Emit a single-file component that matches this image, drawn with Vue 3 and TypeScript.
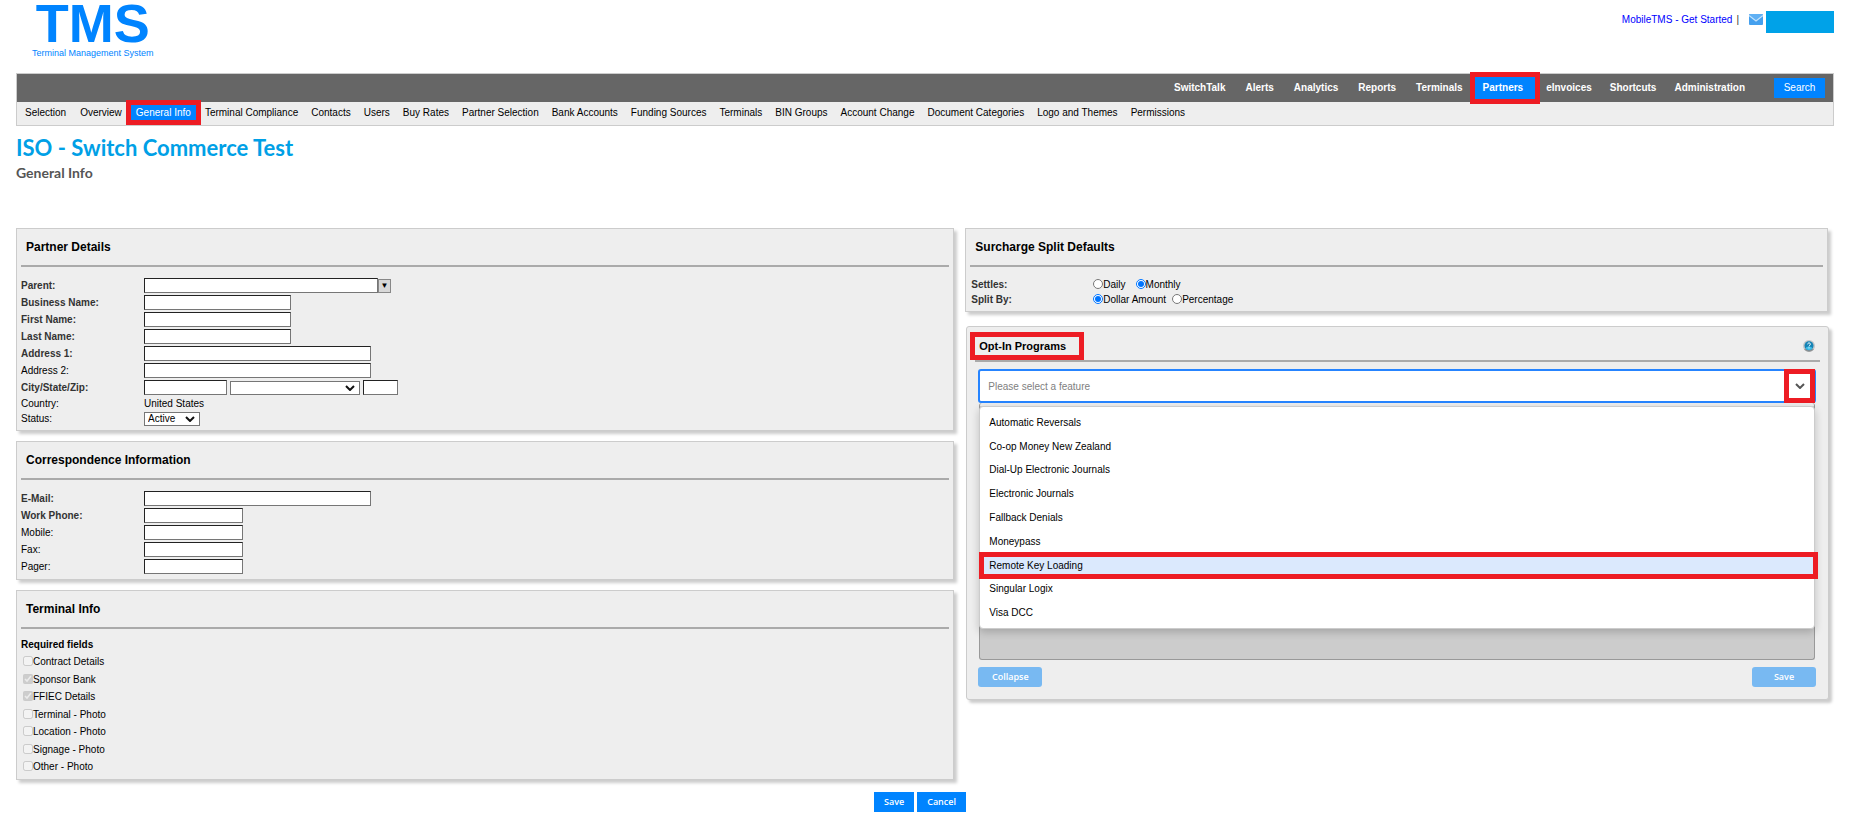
<script setup lang="ts">
import { ref } from 'vue'

interface Field {
  id: string
  label: string
  bold: boolean
  size: string
}

const mainNav: string[] = ['SwitchTalk', 'Alerts', 'Analytics', 'Reports', 'Terminals', 'Partners', 'eInvoices', 'Shortcuts', 'Administration']
const subNav: string[] = [
  'Selection', 'Overview', 'General Info', 'Terminal Compliance', 'Contacts', 'Users', 'Buy Rates',
  'Partner Selection', 'Bank Accounts', 'Funding Sources', 'Terminals', 'BIN Groups', 'Account Change',
  'Document Categories', 'Logo and Themes', 'Permissions',
]
const nameFields: Field[] = [
  { id: 'business', label: 'Business Name:', bold: true, size: 'medium' },
  { id: 'first', label: 'First Name:', bold: true, size: 'medium' },
  { id: 'last', label: 'Last Name:', bold: true, size: 'medium' },
  { id: 'address1', label: 'Address 1:', bold: true, size: 'large' },
  { id: 'address2', label: 'Address 2:', bold: false, size: 'large' },
]
const contactFields: Field[] = [
  { id: 'email', label: 'E-Mail:', bold: true, size: 'large' },
  { id: 'work', label: 'Work Phone:', bold: true, size: 'small' },
  { id: 'mobile', label: 'Mobile:', bold: false, size: 'small' },
  { id: 'fax', label: 'Fax:', bold: false, size: 'small' },
  { id: 'pager', label: 'Pager:', bold: false, size: 'small' },
]
const requiredFields = [
  { label: 'Contract Details', checked: false },
  { label: 'Sponsor Bank', checked: true },
  { label: 'FFIEC Details', checked: true },
  { label: 'Terminal - Photo', checked: false },
  { label: 'Location - Photo', checked: false },
  { label: 'Signage - Photo', checked: false },
  { label: 'Other - Photo', checked: false },
]
const programs: string[] = [
  'Automatic Reversals', 'Co-op Money New Zealand', 'Dial-Up Electronic Journals', 'Electronic Journals',
  'Fallback Denials', 'Moneypass', 'Remote Key Loading', 'Singular Logix', 'Visa DCC',
]
const settles = ref('monthly')
const splitBy = ref('dollar')
const focused = ref('Remote Key Loading')
</script>

<template>
  <div class="page">
    <header class="top">
      <div class="logo">
        <span class="logo-name">TMS</span>
        <span class="logo-sub">Terminal Management System</span>
      </div>
      <div class="account">
        <a href="#">MobileTMS - Get Started</a>
        <span class="bar">|</span>
        <svg class="mail" viewBox="0 0 14 11" aria-hidden="true">
          <rect width="14" height="11" rx="1" fill="#45a0ee" />
          <path d="M1 0h12v2L7 7 1 2z" fill="#5fb0f4" />
          <path d="M0 1.500l7 5.500 7-5.500" fill="none" stroke="#c5e3fb" stroke-width="1.200" />
        </svg>
        <span class="user"></span>
      </div>
    </header>

    <div class="menus">
      <nav class="main-nav">
        <a v-for="item in mainNav" :key="item" href="#" :class="{ active: item === 'Partners' }">{{ item }}</a>
        <button type="button" class="search">Search</button>
      </nav>
      <nav class="sub-nav">
        <a v-for="item in subNav" :key="item" href="#" :class="{ active: item === 'General Info' }">{{ item }}</a>
      </nav>
    </div>

    <h1>ISO - Switch Commerce Test</h1>
    <p class="subtitle">General Info</p>

    <main class="columns">
      <div class="column left">
        <section class="panel details">
          <h2>Partner Details</h2>
          <div class="rows">
            <div class="row">
              <label for="parent" class="strong">Parent:</label>
              <input id="parent" type="text" class="parent">
              <button type="button" class="drop" aria-label="Choose parent">▼</button>
            </div>
            <div v-for="f in nameFields" :key="f.id" class="row">
              <label :for="f.id" :class="{ strong: f.bold }">{{ f.label }}</label>
              <input :id="f.id" type="text" :class="f.size">
            </div>
            <div class="row">
              <label for="city" class="strong">City/State/Zip:</label>
              <input id="city" type="text" class="city">
              <span class="select-wrap state">
                <select aria-label="State"><option></option></select>
                <svg viewBox="0 0 10 6" aria-hidden="true"><path d="M1 1l4 4 4-4" /></svg>
              </span>
              <input type="text" class="zip" aria-label="Zip">
            </div>
            <div class="row short">
              <span class="caption">Country:</span>
              <span>United States</span>
            </div>
            <div class="row short">
              <label for="status">Status:</label>
              <span class="select-wrap status">
                <select id="status"><option>Active</option></select>
                <svg viewBox="0 0 10 6" aria-hidden="true"><path d="M1 1l4 4 4-4" /></svg>
              </span>
            </div>
          </div>
        </section>

        <section class="panel">
          <h2>Correspondence Information</h2>
          <div class="rows">
            <div v-for="f in contactFields" :key="f.id" class="row">
              <label :for="f.id" :class="{ strong: f.bold }">{{ f.label }}</label>
              <input :id="f.id" type="text" :class="f.size">
            </div>
          </div>
        </section>

        <section class="panel">
          <h2>Terminal Info</h2>
          <div class="rows required">
            <strong>Required fields</strong>
            <label v-for="r in requiredFields" :key="r.label">
              <input type="checkbox" :checked="r.checked" disabled>{{ r.label }}
            </label>
          </div>
        </section>
      </div>

      <div class="column right">
        <section class="panel surcharge">
          <h2>Surcharge Split Defaults</h2>
          <div class="rows">
            <div class="row short">
              <span class="caption strong">Settles:</span>
              <label class="choice first"><input v-model="settles" type="radio" name="settles" value="daily">Daily</label>
              <label class="choice"><input v-model="settles" type="radio" name="settles" value="monthly">Monthly</label>
            </div>
            <div class="row short">
              <span class="caption strong">Split By:</span>
              <label class="choice"><input v-model="splitBy" type="radio" name="split" value="dollar">Dollar Amount</label>
              <label class="choice"><input v-model="splitBy" type="radio" name="split" value="percentage">Percentage</label>
            </div>
          </div>
        </section>

        <section class="panel programs">
          <div class="programs-head">
            <h3>Opt-In Programs</h3>
            <svg class="help" viewBox="0 0 12 12" aria-hidden="true">
              <circle cx="6" cy="6" r="6" fill="#c4c6c8" />
              <path d="M1 9a6 6 0 0 0 10 0z" fill="#8f9294" />
              <circle cx="6" cy="5.800" r="4.500" fill="#1583b5" />
              <ellipse cx="6" cy="8.200" rx="3" ry="1.700" fill="#3fc0ea" />
              <path d="M4.700 4.300c0-1.900 2.800-1.700 2.700-.1 0 1-1.300 1-1.400 2.200M6 7.400v1" fill="none" stroke="#fff" />
            </svg>
          </div>
          <div class="combo">
            <input type="text" placeholder="Please select a feature" aria-label="Feature">
            <button type="button" class="toggle" aria-label="Show features">
              <svg viewBox="0 0 10 6" aria-hidden="true"><path d="M1 1l4 4 4-4" /></svg>
            </button>
            <ul class="options">
              <li v-for="p in programs" :key="p" :class="{ focused: p === focused }">
                <button type="button" @click="focused = p">{{ p }}</button>
              </li>
            </ul>
          </div>
          <div class="selected"></div>
          <div class="actions">
            <button type="button">Collapse</button>
            <button type="button">Save</button>
          </div>
        </section>
      </div>
    </main>

    <footer class="form-actions">
      <button type="button">Save</button>
      <button type="button">Cancel</button>
    </footer>
  </div>
</template>

<style>
body {
  margin: 0;
  background: #fff;
}
</style>

<style scoped>
.page {
  box-sizing: border-box;
  padding: 0 18px 0 16px;
  font: 10px/12px "Liberation Sans", Arial, sans-serif;
  color: #000;
}
.page * {
  box-sizing: border-box;
}
a {
  text-decoration: none;
}
button,
input,
select {
  font: inherit;
  margin: 0;
}
.top {
  display: flex;
  justify-content: space-between;
  align-items: flex-start;
  height: 73px;
}
.logo {
  display: flex;
  flex-direction: column;
  align-items: center;
  margin-left: 16px;
  color: #0084ff;
  white-space: nowrap;
}
.logo-name {
  font-size: 54px;
  font-weight: bold;
  line-height: 46px;
}
.logo-sub {
  font-size: 9px;
  line-height: 14px;
}
.account {
  display: flex;
  align-items: flex-start;
  padding-top: 11px;
}
.account a {
  color: #00f;
  line-height: 18px;
}
.bar {
  margin: 0 10px 0 4px;
  line-height: 18px;
  color: #333;
}
.mail {
  width: 14px;
  height: 11px;
  margin: 3px 3px 0 0;
}
.user {
  width: 68px;
  height: 22px;
  background: #00a2e8;
}
.menus {
  border: 1px solid #ccc;
  background: #eee;
}
.main-nav {
  display: flex;
  align-items: center;
  justify-content: flex-end;
  height: 28px;
  padding: 0 8px 0 0;
  background: #666;
}
.main-nav a {
  padding: 0 9px;
  line-height: 22px;
  font-weight: bold;
  color: #fff;
}
.main-nav a:has(~ .active) {
  padding-left: 11px;
}
.main-nav a.active {
  margin: 0 2px 0 3px;
  padding: 0 12px 0 8px;
  background: #0084ff;
  outline: 5px solid #ed1c24;
}
.search {
  width: 51px;
  height: 20px;
  margin-left: 20px;
  padding: 0;
  border: 0;
  color: #fff;
  background: #0084ff;
}
.sub-nav {
  display: flex;
  align-items: center;
  height: 23px;
  padding: 0 0 2px 1px;
  white-space: nowrap;
}
.sub-nav a {
  padding: 0 7px 0 6px;
  color: #000;
}
.sub-nav a:has(~ .active) {
  padding-left: 7px;
}
.sub-nav a.active {
  padding: 0 5px;
  margin: 0 3px 0 2px;
  line-height: 15px;
  color: #fff;
  background: #0084ff;
  outline: 5px solid #ed1c24;
}
h1 {
  margin: 9px 0 0;
  font: bold 22px/26px Lato, sans-serif;
  color: #00a0e6;
}
.subtitle {
  margin: 2px 0 45px;
  font: bold 14px/20px Lato, sans-serif;
  color: #555;
}
.columns {
  display: grid;
  grid-template-columns: 521fr 479fr;
  gap: 11px;
  padding-right: 6px;
}
.column {
  display: flex;
  flex-direction: column;
  gap: 10px;
  min-width: 0;
}
.right {
  gap: 14px;
}
.panel {
  padding: 0 4px 4px;
  border: 1px solid #ccc;
  background: #eee;
  box-shadow: 3px 3px 3px #ccc;
}
h2 {
  height: 38px;
  margin: 0 0 10px;
  padding-left: 5px;
  border-bottom: 2px solid #aaa;
  font-size: 12px;
  line-height: 36px;
}
.rows {
  display: flex;
  flex-direction: column;
}
.row {
  display: flex;
  align-items: center;
  height: 17px;
}
.row.short {
  height: 15px;
}
.row > label:first-child,
.caption {
  width: 123px;
}
.strong {
  font-weight: bold;
  color: #333;
}
.row input[type="text"] {
  height: 15px;
  padding: 0 1px;
  border: 1px solid #767676;
  border-top-color: #222;
  border-left-color: #222;
  background: #fff;
}
.parent {
  width: 234px;
}
.drop {
  width: 13px;
  height: 14px;
  padding: 0;
  border: 1px solid #888;
  background: #d8d8d8;
  font-size: 8px;
  line-height: 10px;
}
.large {
  width: 227px;
}
.medium {
  width: 147px;
}
.small {
  width: 99px;
}
.city {
  width: 83px;
}
.zip {
  width: 35px;
}
.select-wrap {
  display: grid;
  align-items: center;
}
.select-wrap > * {
  grid-area: 1 / 1;
}
.select-wrap select {
  appearance: none;
  height: 14px;
  padding: 0 3px;
  border: 1px solid #767676;
  border-radius: 0;
  background: #fff;
  color: #000;
}
.select-wrap svg {
  justify-self: end;
  width: 10px;
  height: 6px;
  margin-right: 5px;
  pointer-events: none;
}
.select-wrap path {
  fill: none;
  stroke: #111;
  stroke-width: 2;
}
.state {
  width: 130px;
  margin: 0 3px;
}
.status {
  width: 56px;
}
.required {
  justify-content: space-between;
  height: 134px;
  margin-bottom: 2px;
}
.required label {
  display: flex;
  align-items: center;
}
.required input {
  width: 10px;
  height: 10px;
  margin: 0 0 2px 2px;
}
.surcharge .rows {
  padding-left: 1px;
}
.surcharge .caption {
  width: 122px;
}
.choice {
  display: flex;
  align-items: center;
  margin-right: 6px;
}
.choice.first {
  margin-right: 10px;
}
.choice input {
  width: 10px;
  height: 10px;
  margin: 0 0 2px;
}
.programs {
  margin: 0 -1px 0 1px;
  padding: 4px 12px 12px 11px;
  border-radius: 3px;
}
.programs-head {
  display: flex;
  align-items: center;
  justify-content: space-between;
  height: 31px;
  margin: 0 -4px 7px -3px;
  border-bottom: 2px solid #aaa;
}
h3 {
  margin: 0;
  padding: 0 13px 0 4px;
  font-size: 11px;
  line-height: 18px;
  outline: 5px solid #ed1c24;
}
.help {
  width: 12px;
  height: 12px;
  margin-right: 5px;
}
.combo {
  position: relative;
  display: flex;
  align-items: center;
  height: 34px;
  border: 2px solid #2684ff;
  border-radius: 3px;
  background: #fff;
}
.combo input {
  flex: 1;
  min-width: 0;
  height: 28px;
  padding: 0 8px;
  border: 0;
  outline: 0;
  background: none;
}
.combo input::placeholder {
  color: #808080;
}
.toggle {
  display: grid;
  place-items: center;
  width: 31px;
  height: 34px;
  margin-right: -1px;
  padding: 0;
  border: 5px solid #ed1c24;
  background: #fff;
}
.toggle svg {
  width: 10px;
  height: 6px;
}
.toggle path {
  fill: none;
  stroke: #555;
  stroke-width: 2;
}
.options {
  position: absolute;
  z-index: 2;
  top: 35px;
  right: -1px;
  left: -1px;
  display: grid;
  grid-auto-rows: 1fr;
  height: 223px;
  margin: 0;
  padding: 4px 0 3px;
  border: 1px solid #ccc;
  border-radius: 4px;
  background: #fff;
  box-shadow: 0 3px 8px rgba(0, 0, 0, 0.2);
  list-style: none;
}
.options button {
  display: block;
  width: 100%;
  height: 100%;
  padding: 0 9px;
  border: 0;
  background: none;
  color: #000;
  text-align: left;
}
.options .focused {
  margin: 0 -2px 0 1px;
}
.options .focused button {
  padding-left: 8px;
  background: #dbe9fd;
  outline: 5px solid #ed1c24;
  outline-offset: -3px;
}
.selected {
  height: 257px;
  margin: 0 1px;
  border: 1px solid #999;
  border-top: 0;
  border-radius: 3px;
  background: linear-gradient(#eee 3px, #ccc 3px);
}
.actions {
  display: flex;
  justify-content: space-between;
  margin-top: 7px;
}
.actions button {
  width: 64px;
  height: 20px;
  padding: 0;
  border: 0;
  border-radius: 3px;
  background: #78b9f2;
  color: #fff;
  font: 600 9px/20px "Open Sans", sans-serif;
}
.form-actions {
  display: flex;
  justify-content: center;
  gap: 3px;
  margin-top: 12px;
  padding-right: 10px;
}
.form-actions button {
  height: 20px;
  padding: 0 10px;
  border: 0;
  background: #0084ff;
  color: #fff;
  font: 600 9px/20px "Open Sans", sans-serif;
}
</style>
